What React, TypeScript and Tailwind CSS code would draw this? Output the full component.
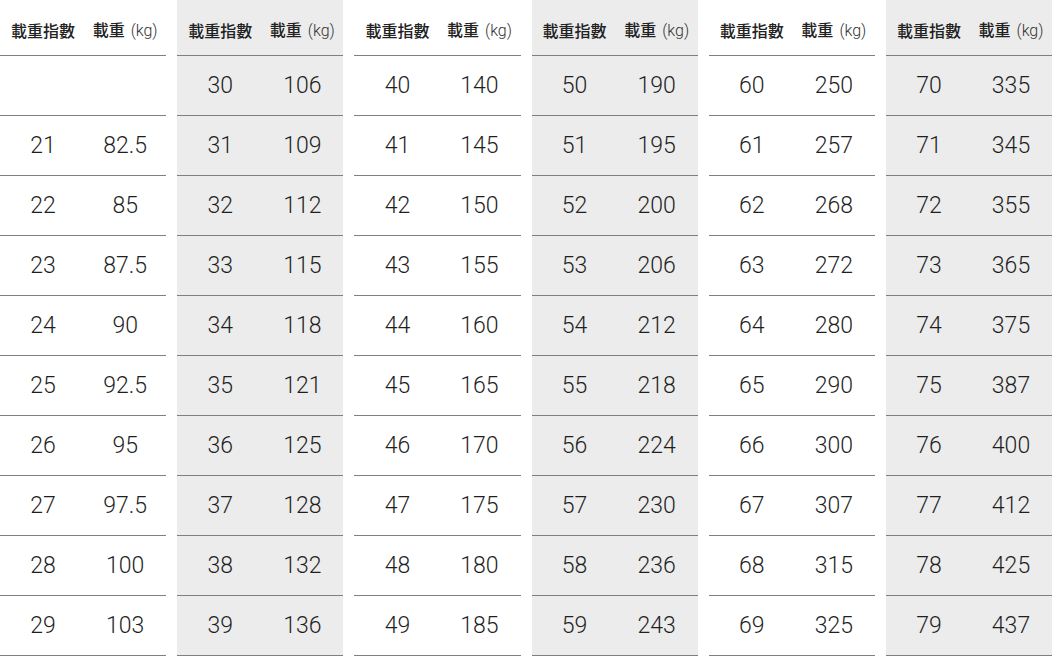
import React from "react";

const tables: { shaded: boolean; rows: [string, string][] }[] = [
  { shaded: false, rows: [["", ""], ["21", "82.5"], ["22", "85"], ["23", "87.5"], ["24", "90"], ["25", "92.5"], ["26", "95"], ["27", "97.5"], ["28", "100"], ["29", "103"]] },
  { shaded: true, rows: [["30", "106"], ["31", "109"], ["32", "112"], ["33", "115"], ["34", "118"], ["35", "121"], ["36", "125"], ["37", "128"], ["38", "132"], ["39", "136"]] },
  { shaded: false, rows: [["40", "140"], ["41", "145"], ["42", "150"], ["43", "155"], ["44", "160"], ["45", "165"], ["46", "170"], ["47", "175"], ["48", "180"], ["49", "185"]] },
  { shaded: true, rows: [["50", "190"], ["51", "195"], ["52", "200"], ["53", "206"], ["54", "212"], ["55", "218"], ["56", "224"], ["57", "230"], ["58", "236"], ["59", "243"]] },
  { shaded: false, rows: [["60", "250"], ["61", "257"], ["62", "268"], ["63", "272"], ["64", "280"], ["65", "290"], ["66", "300"], ["67", "307"], ["68", "315"], ["69", "325"]] },
  { shaded: true, rows: [["70", "335"], ["71", "345"], ["72", "355"], ["73", "365"], ["74", "375"], ["75", "387"], ["76", "400"], ["77", "412"], ["78", "425"], ["79", "437"]] },
];

export default function App() {
  return (
    <div
      className="flex w-[1052px] h-[656px] gap-[11px] bg-white text-[#222] overflow-hidden"
      style={{ fontFamily: '"Noto Sans CJK JP", "Noto Sans", sans-serif' }}
    >
      {tables.map((t, i) => (
        <div key={i} className={`flex-1 flex flex-col ${t.shaded ? "bg-[#ececec]" : "bg-white"}`}>
          <div className="h-[56px] border-b border-[#808080] flex items-center pt-[4px]">
            <div className="flex-1 text-center text-[16px] font-medium leading-none pl-[2px]">載重指數</div>
            <div className="flex-1 text-center text-[16px] font-medium leading-none whitespace-nowrap">
              載重
              <span className="text-[16px] font-light text-[#333] ml-[6px] font-['Roboto',sans-serif]">(kg)</span>
            </div>
          </div>
          {t.rows.map((r, j) => (
            <div
              key={j}
              className="h-[60px] border-b border-[#808080] flex items-center text-[23px] font-light text-[#1f1f1f] font-['Roboto',sans-serif] leading-none"
            >
              <div className="flex-1 text-center pl-[2px]">{r[0]}</div>
              <div className="flex-1 text-center">{r[1]}</div>
            </div>
          ))}
        </div>
      ))}
    </div>
  );
}
